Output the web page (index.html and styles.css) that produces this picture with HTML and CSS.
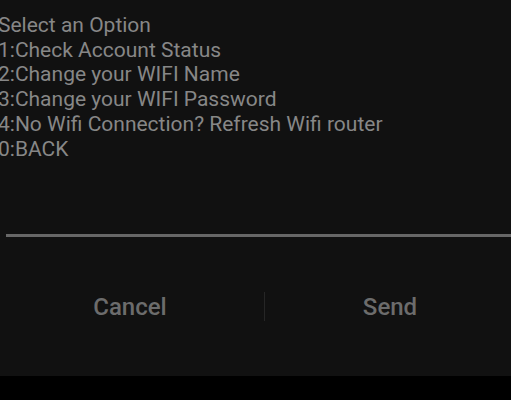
FILE: index.html
```html
<!DOCTYPE html>
<html>
<head>
<meta charset="utf-8">
<link rel="stylesheet" href="styles.css">
</head>
<body>
<div class="dialog">
  <div class="message">
    <div>Select an Option</div>
    <div>1:Check Account Status</div>
    <div>2:Change your WIFI Name</div>
    <div>3:Change your WIFI Password</div>
    <div>4:No Wifi Connection? Refresh Wifi router</div>
    <div>0:BACK</div>
  </div>
  <div class="field"></div>
  <div class="actions">
    <div class="btn btn-cancel">Cancel</div>
    <div class="divider"></div>
    <div class="btn btn-send">Send</div>
  </div>
</div>
</body>
</html>
```
FILE: styles.css
```css
html, body {
  margin: 0;
  padding: 0;
  background: #000;
  overflow: hidden;
}
body {
  width: 511px;
  height: 400px;
  font-family: Roboto, "Noto Sans", sans-serif;
}
.dialog {
  height: 376px;
  background: #111111;
  display: flex;
  flex-direction: column;
}
.message {
  padding-top: 13px;
  margin-left: -2px;
  font-size: 21px;
  line-height: 24.7px;
  color: #878787;
  white-space: nowrap;
}
.field {
  height: 73px;
  margin-left: 6px;
  border-bottom: 3px solid #676767;
}
.actions {
  margin-top: 55px;
  height: 27px;
  display: grid;
  grid-template-columns: 264px 1px 1fr;
}
.btn {
  margin-top: 2px;
  font-size: 24px;
  font-weight: 500;
  line-height: 27px;
  color: #6c6c6c;
  text-align: center;
}
.btn-cancel {
  padding-right: 4px;
}
.btn-send {
  padding-left: 4px;
}
.divider {
  background: #262626;
}
```
